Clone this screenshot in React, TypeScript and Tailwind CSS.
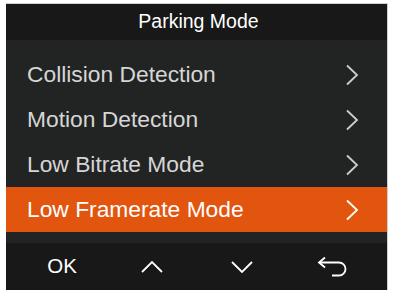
import React from "react";

const Chevron = () => (
  <svg width="14" height="22" viewBox="0 0 14 22" fill="none">
    <path d="M2 1.5 L12 11 L2 20.5" stroke="currentColor" strokeWidth="1.8" />
  </svg>
);

const items = [
  "Collision Detection",
  "Motion Detection",
  "Low Bitrate Mode",
  "Low Framerate Mode",
];

export default function App() {
  return (
    <div className="w-[394px] h-[296px] bg-white pt-[3px] pl-[6px]" style={{ fontFamily: '"Liberation Sans", Arial, sans-serif' }}>
      <div className="w-[382px] h-[287px] border-t border-r border-[#cfcfcf] flex flex-col">
        <div className="h-[36px] bg-[#181818] flex items-center justify-center text-white text-[19.5px] pl-[4px]">
          Parking Mode
        </div>
        <div className="flex-1 bg-[#222423] pt-[12px] pb-[11px] flex flex-col">
          {items.map((t, i) => {
            const sel = i === 3;
            return (
              <div
                key={t}
                className={`h-[45px] flex items-center justify-between pl-[21px] pr-[28px] text-[22.8px] ${sel ? "bg-[#e1550f] text-white" : "text-[#d6d6d6]"}`}
              >
                <span>{t}</span>
                <span className={sel ? "text-white" : "text-[#cfcfcf]"}>
                  <Chevron />
                </span>
              </div>
            );
          })}
        </div>
        <div className="h-[47px] bg-[#181818] flex items-center pl-[11px] text-white">
          <div className="w-[90px] flex justify-center text-[20.5px]">OK</div>
          <div className="w-[90px] flex justify-center">
            <svg width="24" height="14" viewBox="0 0 24 14" fill="none">
              <path d="M2 12 L12 2 L22 12" stroke="white" strokeWidth="1.8" />
            </svg>
          </div>
          <div className="w-[90px] flex justify-center">
            <svg width="24" height="14" viewBox="0 0 24 14" fill="none">
              <path d="M2 2 L12 12 L22 2" stroke="white" strokeWidth="1.8" />
            </svg>
          </div>
          <div className="w-[90px] flex justify-center">
            <svg width="30" height="22" viewBox="0 0 30 22" fill="none">
              <path d="M8 1.5 L2 6.5 L8 11.5" stroke="white" strokeWidth="1.8" />
              <path d="M2 6.5 H22 A6.5 6.5 0 0 1 22 19.5 H15" stroke="white" strokeWidth="1.8" />
            </svg>
          </div>
        </div>
      </div>
    </div>
  );
}
